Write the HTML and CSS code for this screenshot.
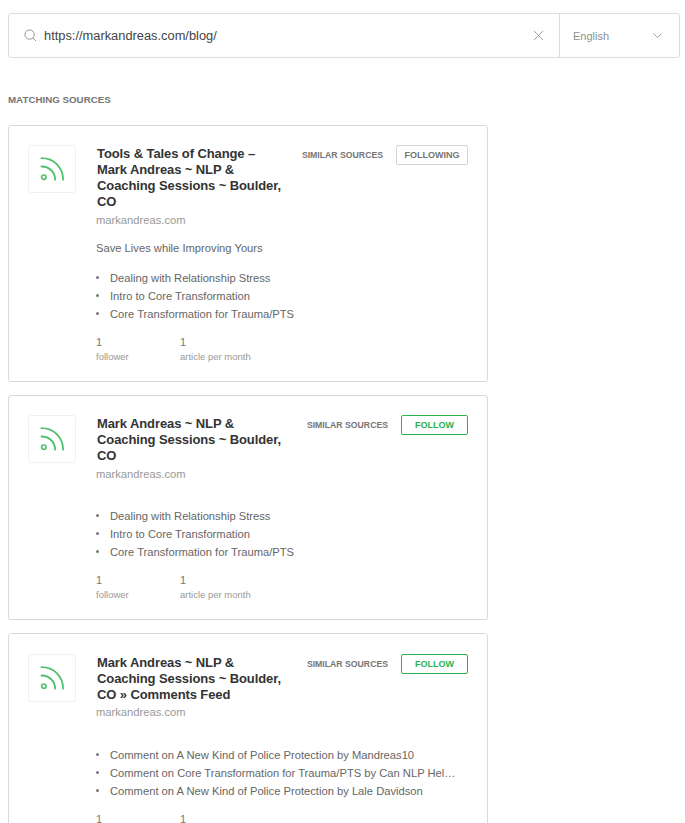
FILE: index.html
```html
<!DOCTYPE html>
<html lang="en">
<head>
<meta charset="utf-8">
<title>Matching sources</title>
<link rel="stylesheet" href="styles.css">
</head>
<body>
<svg class="defs" width="0" height="0" aria-hidden="true">
  <symbol id="rss" viewBox="0 0 24 24">
    <circle cx="3.8" cy="20.2" r="2.2" fill="none" stroke="currentColor" stroke-width="1.7"/>
    <path d="M1.5 9.5c7.8 0 13.6 5.6 13.6 13.2" fill="none" stroke="currentColor" stroke-width="1.8" stroke-linecap="round"/>
    <path d="M1.5 1.2c12.4 0 21.6 9.2 21.6 21.5" fill="none" stroke="currentColor" stroke-width="1.8" stroke-linecap="round"/>
  </symbol>
</svg>
<header class="search">
  <div class="search-main">
    <svg class="icon-search" viewBox="0 0 14 14" aria-hidden="true"><circle cx="6" cy="6" r="5" fill="none" stroke="currentColor"/><path d="M9.6 9.6l3.4 3.4" fill="none" stroke="currentColor"/></svg>
    <span class="query">https://markandreas.com/blog/</span>
    <svg class="icon-clear" viewBox="0 0 12 12" aria-hidden="true"><path d="M1 1l10 10M11 1L1 11" fill="none" stroke="currentColor"/></svg>
  </div>
  <div class="lang">
    <span>English</span>
    <svg class="icon-chevron" viewBox="0 0 9 5" aria-hidden="true"><path d="M.5.5l4 4 4-4" fill="none" stroke="currentColor"/></svg>
  </div>
</header>
<h2 class="section-title">MATCHING SOURCES</h2>
<main class="cards">
  <article class="card">
    <div class="logo"><svg class="rss"><use href="#rss"/></svg></div>
    <div class="body">
      <div class="head">
        <div class="titles">
          <h3 class="title">Tools &amp; Tales of Change – Mark Andreas ~ NLP &amp; Coaching Sessions ~ Boulder, CO</h3>
          <div class="domain">markandreas.com</div>
        </div>
        <div class="actions">
          <a class="similar">SIMILAR SOURCES</a>
          <button class="btn btn-following">FOLLOWING</button>
        </div>
      </div>
      <p class="desc">Save Lives while Improving Yours</p>
      <ul class="items">
        <li>Dealing with Relationship Stress</li>
        <li>Intro to Core Transformation</li>
        <li>Core Transformation for Trauma/PTS</li>
      </ul>
      <div class="stats">
        <div class="stat"><b>1</b><span>follower</span></div>
        <div class="stat"><b>1</b><span>article per month</span></div>
      </div>
    </div>
  </article>
  <article class="card">
    <div class="logo"><svg class="rss"><use href="#rss"/></svg></div>
    <div class="body">
      <div class="head">
        <div class="titles">
          <h3 class="title">Mark Andreas ~ NLP &amp; Coaching Sessions ~ Boulder, CO</h3>
          <div class="domain">markandreas.com</div>
        </div>
        <div class="actions">
          <a class="similar">SIMILAR SOURCES</a>
          <button class="btn btn-follow">FOLLOW</button>
        </div>
      </div>
      <p class="desc desc-empty"></p>
      <ul class="items">
        <li>Dealing with Relationship Stress</li>
        <li>Intro to Core Transformation</li>
        <li>Core Transformation for Trauma/PTS</li>
      </ul>
      <div class="stats">
        <div class="stat"><b>1</b><span>follower</span></div>
        <div class="stat"><b>1</b><span>article per month</span></div>
      </div>
    </div>
  </article>
  <article class="card">
    <div class="logo"><svg class="rss"><use href="#rss"/></svg></div>
    <div class="body">
      <div class="head">
        <div class="titles">
          <h3 class="title">Mark Andreas ~ NLP &amp; Coaching Sessions ~ Boulder, CO » Comments Feed</h3>
          <div class="domain">markandreas.com</div>
        </div>
        <div class="actions">
          <a class="similar">SIMILAR SOURCES</a>
          <button class="btn btn-follow">FOLLOW</button>
        </div>
      </div>
      <p class="desc desc-empty"></p>
      <ul class="items">
        <li>Comment on A New Kind of Police Protection by Mandreas10</li>
        <li>Comment on Core Transformation for Trauma/PTS by Can NLP Hel…</li>
        <li>Comment on A New Kind of Police Protection by Lale Davidson</li>
      </ul>
      <div class="stats">
        <div class="stat"><b>1</b><span>follower</span></div>
        <div class="stat"><b>1</b><span>article per month</span></div>
      </div>
    </div>
  </article>
</main>
</body>
</html>
```
FILE: styles.css
```css
* { box-sizing: border-box; }
html, body { height: 823px; overflow: hidden; }
body {
  margin: 0;
  padding: 13px 5px 0 8px;
  background: #fff;
  font-family: "Liberation Sans", Arial, sans-serif;
  color: #333;
}
.defs { position: absolute; }
.search {
  display: flex;
  height: 45px;
  border: 1px solid #dcdcdc;
  border-radius: 3px;
}
.search-main {
  flex: 1;
  display: flex;
  align-items: center;
  padding: 0 15px;
}
.icon-search { width: 13px; height: 13px; color: #8a8a8a; margin-right: 7px; flex: none; }
.query { flex: 1; font-size: 12.85px; color: #444; }
.icon-clear { width: 11px; height: 11px; color: #9a9a9a; flex: none; }
.lang {
  width: 120px;
  display: flex;
  align-items: center;
  justify-content: space-between;
  padding: 0 17px 0 13px;
  border-left: 1px solid #dcdcdc;
  font-size: 11px;
  color: #8f8f8f;
}
.icon-chevron { width: 9px; height: 5px; color: #a0a0a0; }
.section-title {
  margin: 36px 0 19px;
  font-size: 9.75px;
  line-height: 12px;
  font-weight: 700;
  color: #757575;
}
.cards { display: flex; flex-direction: column; gap: 13px; width: 480px; }
.card {
  display: flex;
  gap: 20px;
  padding: 19px 19px 17px;
  border: 1px solid #d9d9d9;
  border-radius: 3px;
}
.card:last-child { padding-top: 20px; }
.logo {
  width: 48px;
  height: 48px;
  flex: none;
  display: flex;
  align-items: center;
  justify-content: center;
  border: 1px solid #f0f0f0;
  border-radius: 3px;
}
.rss { width: 24px; height: 24px; color: #4fc06c; }
.body { flex: 1; min-width: 0; }
.head { display: flex; justify-content: space-between; align-items: flex-start; gap: 18px; }
.titles { flex: 1; min-width: 0; }
.title { margin: 0; padding: 1px 0 0 1px; font-size: 13px; line-height: 16px; letter-spacing: -0.1px; font-weight: 700; color: #333; }
.domain { margin-top: 2px; font-size: 11.2px; line-height: 16px; color: #999; }
.card:last-child .domain { margin-top: 1px; margin-bottom: 1px; }
.actions { display: flex; align-items: center; gap: 13px; flex: none; }
.similar { font-size: 8.7px; font-weight: 700; color: #757575; }
.btn {
  height: 20px;
  padding: 0;
  background: #fff;
  border-radius: 2px;
  font: 700 9px "Liberation Sans", Arial, sans-serif;
}
.btn-following { width: 72px; border: 1px solid #d4d4d4; color: #757575; }
.btn-follow { width: 67px; border: 1px solid #2bb24c; color: #2bb24c; }
.desc { margin: 12px 0 13px; font-size: 11.2px; line-height: 16px; color: #666; }
.desc-empty { display: flow-root; height: 0; }
.items { margin: 0; padding: 0; list-style: none; }
.items li {
  position: relative;
  padding-left: 14px;
  font-size: 11.2px;
  line-height: 18px;
  color: #666;
  white-space: nowrap;
}
.items li::before {
  content: "";
  position: absolute;
  left: 0;
  top: 7px;
  width: 3px;
  height: 3px;
  border-radius: 50%;
  background: #777;
}
.stats { display: flex; margin-top: 12px; }
.stat { width: 84px; display: flex; flex-direction: column; }
.stat b { font-size: 11px; line-height: 14px; font-weight: 400; color: #777; }
.stat span { margin-top: 1px; font-size: 9.5px; line-height: 14px; color: #999; }
```
